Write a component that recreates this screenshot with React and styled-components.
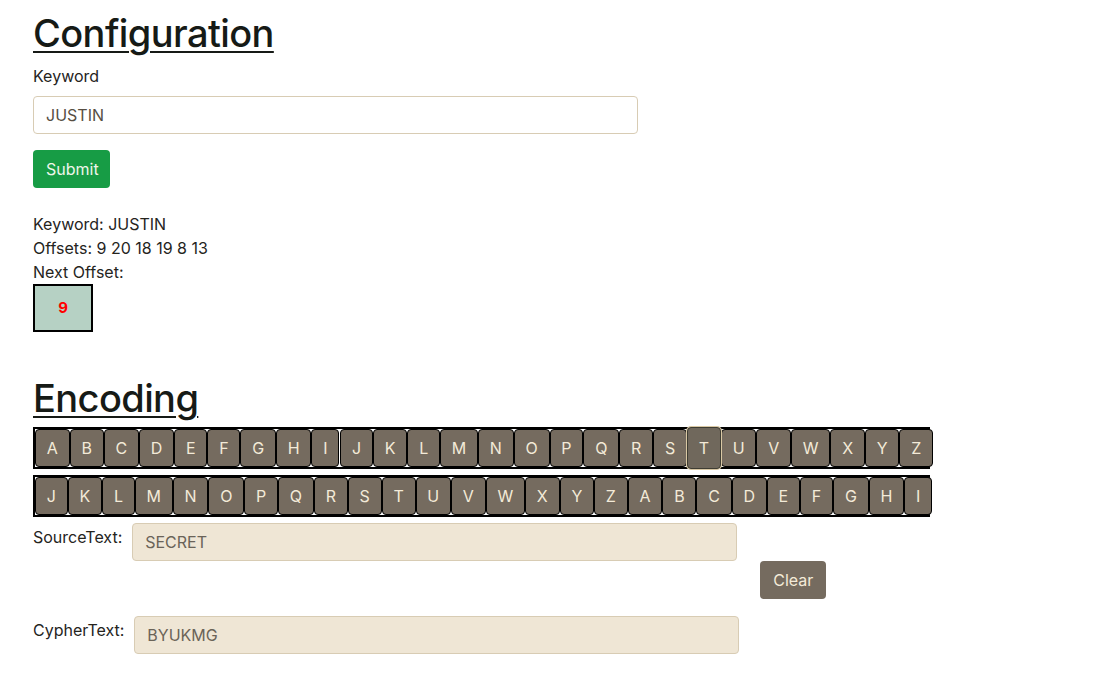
import React from "react";
import styled, { createGlobalStyle, css } from "styled-components";

const GlobalStyle = createGlobalStyle`
  body {
    margin: 0;
    background: #ffffff;
    color: #25241d;
    font-family: Inter, "Noto Sans", "Liberation Sans", sans-serif;
    font-size: 16px;
    line-height: 24px;
  }
  * { box-sizing: border-box; }
`;

const Page = styled.div`
  padding: 9px 33px 24px;
`;

const Heading = styled.h2`
  margin: 0;
  font-size: 38px;
  line-height: 48px;
  font-weight: 500;
  color: #161a16;
  letter-spacing: -0.6px;
  text-decoration: underline;
  text-decoration-thickness: 2px;
  text-underline-offset: 4px;
  margin-top: ${p => p.$top || 0}px;
`;

const Label = styled.label`
  display: block;
  margin: 7px 0 8px;
`;

const TextInput = styled.input`
  display: block;
  width: ${p => p.$width || 605}px;
  height: 38px;
  padding: 6px 12px;
  font: inherit;
  color: ${p => (p.$filled ? "#6a6358" : "#574e42")};
  background: ${p => (p.$filled ? "#efe6d5" : "#ffffff")};
  border: 1px solid #d8ccb4;
  border-radius: 4px;
  outline: none;
`;

const Button = styled.button`
  height: 38px;
  padding: 6px 12px;
  font: inherit;
  border: 1px solid transparent;
  border-radius: 4px;
  cursor: pointer;
  ${p =>
    p.$variant === "success"
      ? css`
          background: #179c45;
          color: #eef6ea;
        `
      : css`
          background: #756b5f;
          color: #f3ead8;
        `}
`;

const SubmitButton = styled(Button)`
  margin-top: 16px;
  width: 77px;
`;

const Info = styled.div`
  margin-top: 24px;
`;

const OffsetBox = styled.div`
  width: 60px;
  height: 48px;
  border: 2px solid #000;
  background: #b6d1c4;
  color: #ff0000;
  font-weight: 700;
  font-size: 15px;
  display: flex;
  align-items: center;
  justify-content: center;
`;

const KeyRow = styled.div`
  display: flex;
  width: 897px;
  height: 42px;
  border: 2px solid #000;
  margin-top: ${p => p.$top}px;
`;

const Key = styled.button`
  flex-shrink: 0;
  height: 38px;
  padding: 0 10.8px;
  font: inherit;
  color: #f3ead8;
  background: #756b5f;
  border: 1px solid #000;
  border-radius: 4px;
  margin-left: ${p => (p.$gap ? 1 : 0)}px;
  ${p =>
    p.$active &&
    css`
      position: relative;
      border-color: #3f3d33;
      background: #70685c;
      box-shadow: 0 0 0 1px #d9c8a4;
      height: 42px;
      margin-top: -2px;
    `}
`;

const FieldRow = styled.div`
  display: flex;
  align-items: flex-start;
  margin-top: ${p => p.$top}px;
`;

const FieldLabel = styled.span`
  margin-right: 10px;
  line-height: 24px;
  padding-top: 2px;
`;

const ClearButton = styled(Button)`
  margin: 38px 0 0 23px;
  width: 66px;
`;

const LETTERS = "ABCDEFGHIJKLMNOPQRSTUVWXYZ".split("");
const SHIFTED = LETTERS.map((_, i) => LETTERS[(i + 9) % 26]);

export default function App() {
  return (
    <Page>
      <GlobalStyle />
      <Heading>Configuration</Heading>
      <Label>Keyword</Label>
      <TextInput defaultValue="JUSTIN" />
      <SubmitButton $variant="success">Submit</SubmitButton>

      <Info>
        <div>Keyword: JUSTIN</div>
        <div>Offsets: 9 20 18 19 8 13</div>
        <div>Next Offset:</div>
        <OffsetBox>9</OffsetBox>
      </Info>

      <Heading $top={42}>Encoding</Heading>
      <KeyRow $top={5}>
        {LETTERS.map((l, i) => (
          <Key key={l} $gap={i === 9} $active={l === "T"}>
            {l}
          </Key>
        ))}
      </KeyRow>
      <KeyRow $top={6}>
        {SHIFTED.map(l => (
          <Key key={l}>{l}</Key>
        ))}
      </KeyRow>

      <FieldRow $top={6}>
        <FieldLabel>SourceText:</FieldLabel>
        <TextInput $filled defaultValue="SECRET" />
        <ClearButton>Clear</ClearButton>
      </FieldRow>
      <FieldRow $top={17}>
        <FieldLabel>CypherText:</FieldLabel>
        <TextInput $filled defaultValue="BYUKMG" />
      </FieldRow>
    </Page>
  );
}
